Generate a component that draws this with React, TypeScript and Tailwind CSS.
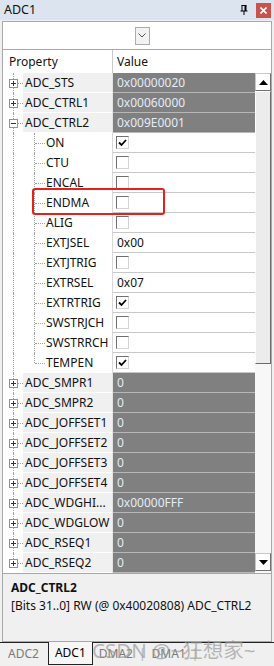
import { ReactElement } from "react";

interface Reg {
  name: string;
  value: string;
  expanded?: boolean;
}

interface Field {
  name: string;
  value?: string;
  checked?: boolean;
}

const before: Reg[] = [
  { name: "ADC_STS", value: "0x00000020" },
  { name: "ADC_CTRL1", value: "0x00060000" },
  { name: "ADC_CTRL2", value: "0x009E0001", expanded: true },
];

const fields: Field[] = [
  { name: "ON", checked: true },
  { name: "CTU", checked: false },
  { name: "ENCAL", checked: false },
  { name: "ENDMA", checked: false },
  { name: "ALIG", checked: false },
  { name: "EXTJSEL", value: "0x00" },
  { name: "EXTJTRIG", checked: false },
  { name: "EXTRSEL", value: "0x07" },
  { name: "EXTRTRIG", checked: true },
  { name: "SWSTRJCH", checked: false },
  { name: "SWSTRRCH", checked: false },
  { name: "TEMPEN", checked: true },
];

const after: Reg[] = [
  { name: "ADC_SMPR1", value: "0" },
  { name: "ADC_SMPR2", value: "0" },
  { name: "ADC_JOFFSET1", value: "0" },
  { name: "ADC_JOFFSET2", value: "0" },
  { name: "ADC_JOFFSET3", value: "0" },
  { name: "ADC_JOFFSET4", value: "0" },
  { name: "ADC_WDGHI...", value: "0x00000FFF" },
  { name: "ADC_WDGLOW", value: "0" },
  { name: "ADC_RSEQ1", value: "0" },
  { name: "ADC_RSEQ2", value: "0" },
];

function Expander({ open }: { open?: boolean }): ReactElement {
  return (
    <span className="absolute left-[6px] top-[6px] w-[9px] h-[9px] border border-[#919191] bg-white flex items-center justify-center">
      <span className="absolute w-[5px] h-px bg-[#333]" />
      {!open && <span className="absolute w-px h-[5px] bg-[#333]" />}
    </span>
  );
}

function RegRow({ reg, last }: { reg: Reg; last?: boolean }): ReactElement {
  return (
    <div className="flex h-[20px]">
      <div className="relative w-[20px] shrink-0">
        <span className={`absolute left-[10px] top-0 border-l border-dotted border-[#a0a0a0] ${last ? "h-[10px]" : "h-[20px]"}`} />
        <span className="absolute left-[14px] top-[10px] w-[6px] border-t border-dotted border-[#a0a0a0]" />
        <Expander open={reg.expanded} />
      </div>
      <div className="w-[89px] shrink-0 bg-[#f0f0f0] border-b border-white pl-[2px] leading-[19px] whitespace-nowrap overflow-hidden">
        {reg.name}
      </div>
      <div className="w-px bg-[#e4e4e4]" />
      <div className="w-[142px] shrink-0 bg-[#808080] border-b border-[#b8b8b8] pl-[4px] leading-[19px] text-[#e3ecf7]">
        {reg.value}
      </div>
    </div>
  );
}

function Check({ on }: { on?: boolean }): ReactElement {
  return (
    <span className="mt-[3px] w-[13px] h-[13px] border border-t-[#707070] border-l-[#707070] border-r-[#d4d4d4] border-b-[#d4d4d4] bg-white flex items-center justify-center">
      {on && (
        <svg width="9" height="8" viewBox="0 0 9 8">
          <path d="M1 3.5 L3.5 6 L8 1" stroke="#000" strokeWidth="1.8" fill="none" />
        </svg>
      )}
    </span>
  );
}

function FieldRow({ f, last }: { f: Field; last?: boolean }): ReactElement {
  return (
    <div className="flex h-[20px]">
      <div className="relative w-[20px] shrink-0">
        <span className="absolute left-[10px] top-0 h-[20px] border-l border-dotted border-[#a0a0a0]" />
      </div>
      <div className="relative w-[89px] shrink-0 bg-white leading-[20px] pl-[23px] whitespace-nowrap">
        <span className={`absolute left-[11px] top-0 border-l border-dotted border-[#a0a0a0] ${last ? "h-[10px]" : "h-[20px]"}`} />
        <span className="absolute left-[12px] top-[10px] w-[10px] border-t border-dotted border-[#a0a0a0]" />
        {f.name}
      </div>
      <div className="w-px bg-[#d8d8d8]" />
      <div className="w-[142px] shrink-0 bg-white border-b border-[#c8c8c8] pl-[3px] leading-[19px] flex">
        {f.value !== undefined ? <span className="pl-px">{f.value}</span> : <Check on={f.checked} />}
      </div>
    </div>
  );
}

function ScrollBtn({ up }: { up?: boolean }): ReactElement {
  return (
    <div className="h-[18px] bg-white border border-[#c8c8c8] border-r-[#707070] border-b-[#707070] flex items-center justify-center">
      <svg width="9" height="5" viewBox="0 0 9 5">
        <path d={up ? "M0 5 L4.5 0 L9 5 Z" : "M0 0 L4.5 5 L9 0 Z"} fill="#000" />
      </svg>
    </div>
  );
}

export default function App(): ReactElement {
  return (
    <div className="w-[274px] h-[666px] bg-[#f0f0f0] text-[12px] text-[#111] flex flex-col overflow-hidden font-['Noto_Sans','Liberation_Sans',sans-serif]">
      {/* title */}
      <div className="h-[20px] bg-[#dbe4ef] flex items-center pl-[4px] pr-[3px]">
        <span className="text-[12.5px]">ADC1</span>
        <div className="ml-auto flex items-center gap-[8px]">
          <svg width="8" height="10" viewBox="0 0 8 10">
            <path d="M1.5 0.5 H6.5 M2 0.5 V6 M5 0.5 V6 M0.5 6 H7.5 M4 6 V10" stroke="#000" strokeWidth="1" fill="none" />
            <rect x="5" y="0.5" width="1.5" height="5.5" fill="#000" />
          </svg>
          <div className="w-[15px] h-[15px] bg-[#c9514e] flex items-center justify-center">
            <svg width="7" height="7" viewBox="0 0 7 7">
              <path d="M0.5 0.5 L6.5 6.5 M6.5 0.5 L0.5 6.5" stroke="#fff" strokeWidth="1.6" />
            </svg>
          </div>
        </div>
      </div>

      <div className="relative mx-[2px] mt-px border border-[#a8a8a8] bg-white flex flex-col">
        {/* combo row */}
        <div className="h-[28px] border-b border-[#a8a8a8] flex justify-center items-center">
          <div className="ml-[10px] w-[15px] h-[18px] bg-[#f2f2f2] border border-[#acacac] flex items-center justify-center">
            <svg width="8" height="5" viewBox="0 0 8 5">
              <path d="M0.5 0.5 L4 4 L7.5 0.5" stroke="#555" fill="none" />
            </svg>
          </div>
        </div>

        {/* header */}
        <div className="flex h-[23px] leading-[23px]">
          <div className="w-[109px] shrink-0 pl-[6px]">Property</div>
          <div className="w-px bg-[#c8c8c8]" />
          <div className="pl-[4px]">Value</div>
        </div>

        {/* grid */}
        <div className="flex">
          <div className="flex flex-col">
            {before.map((r) => (
              <RegRow key={r.name} reg={r} />
            ))}
            {fields.map((f, i) => (
              <FieldRow key={f.name} f={f} last={i === fields.length - 1} />
            ))}
            {after.map((r, i) => (
              <RegRow key={r.name} reg={r} last={i === after.length - 1} />
            ))}
          </div>
          <div className="w-[16px] bg-[#f7f7f7] flex flex-col">
            <ScrollBtn up />
            <div className="h-[273px] bg-[#ececec] border border-white border-r-[#6a6a6a] border-b-[#6a6a6a]" />
            <div className="flex-1" />
            <ScrollBtn />
            <div className="h-[2px]" />
          </div>
        </div>

        {/* highlight */}
        <div className="absolute left-[29px] top-[166px] w-[133px] h-[27px] border-[2.5px] border-[#e8201c] rounded-[3px]" />

        {/* description */}
        <div className="h-[68px] bg-[#f0f0f0] border-t border-[#a8a8a8] px-[8px] pt-[5px]">
          <div className="font-bold leading-[18px]">ADC_CTRL2</div>
          <div className="leading-[18px]">[Bits 31..0] RW (@ 0x40020808) ADC_CTRL2</div>
        </div>
      </div>

      {/* tabs */}
      <div className="relative flex-1 border-t border-[#222] flex items-start text-[12px]">
        <div className="pl-[8px] pr-[9px] h-[22px] leading-[22px] text-[#7a7a7a]">ADC2</div>
        <div className="-mt-px h-[23px] px-[6px] leading-[22px] bg-[#f7f7f7] border-x border-b border-[#222] text-black">ADC1</div>
        <div className="pl-[6px] h-[22px] leading-[22px] text-[#7a7a7a]">DMA2</div>
        <div className="px-[6px] h-[22px] leading-[22px] text-[#b0b0b0]">|</div>
        <div className="h-[22px] leading-[22px] text-[#7a7a7a]">DMA1</div>
        <div className="px-[6px] h-[22px] leading-[22px] text-[#b0b0b0]">|</div>
        <div className="absolute left-[92px] -top-[7px] text-[20.5px] leading-[28px] text-[#9a9a9a]/70 whitespace-nowrap font-['Noto_Sans','Noto_Sans_CJK_SC',sans-serif]">
          CSDN @~狂想家~
        </div>
      </div>
    </div>
  );
}
